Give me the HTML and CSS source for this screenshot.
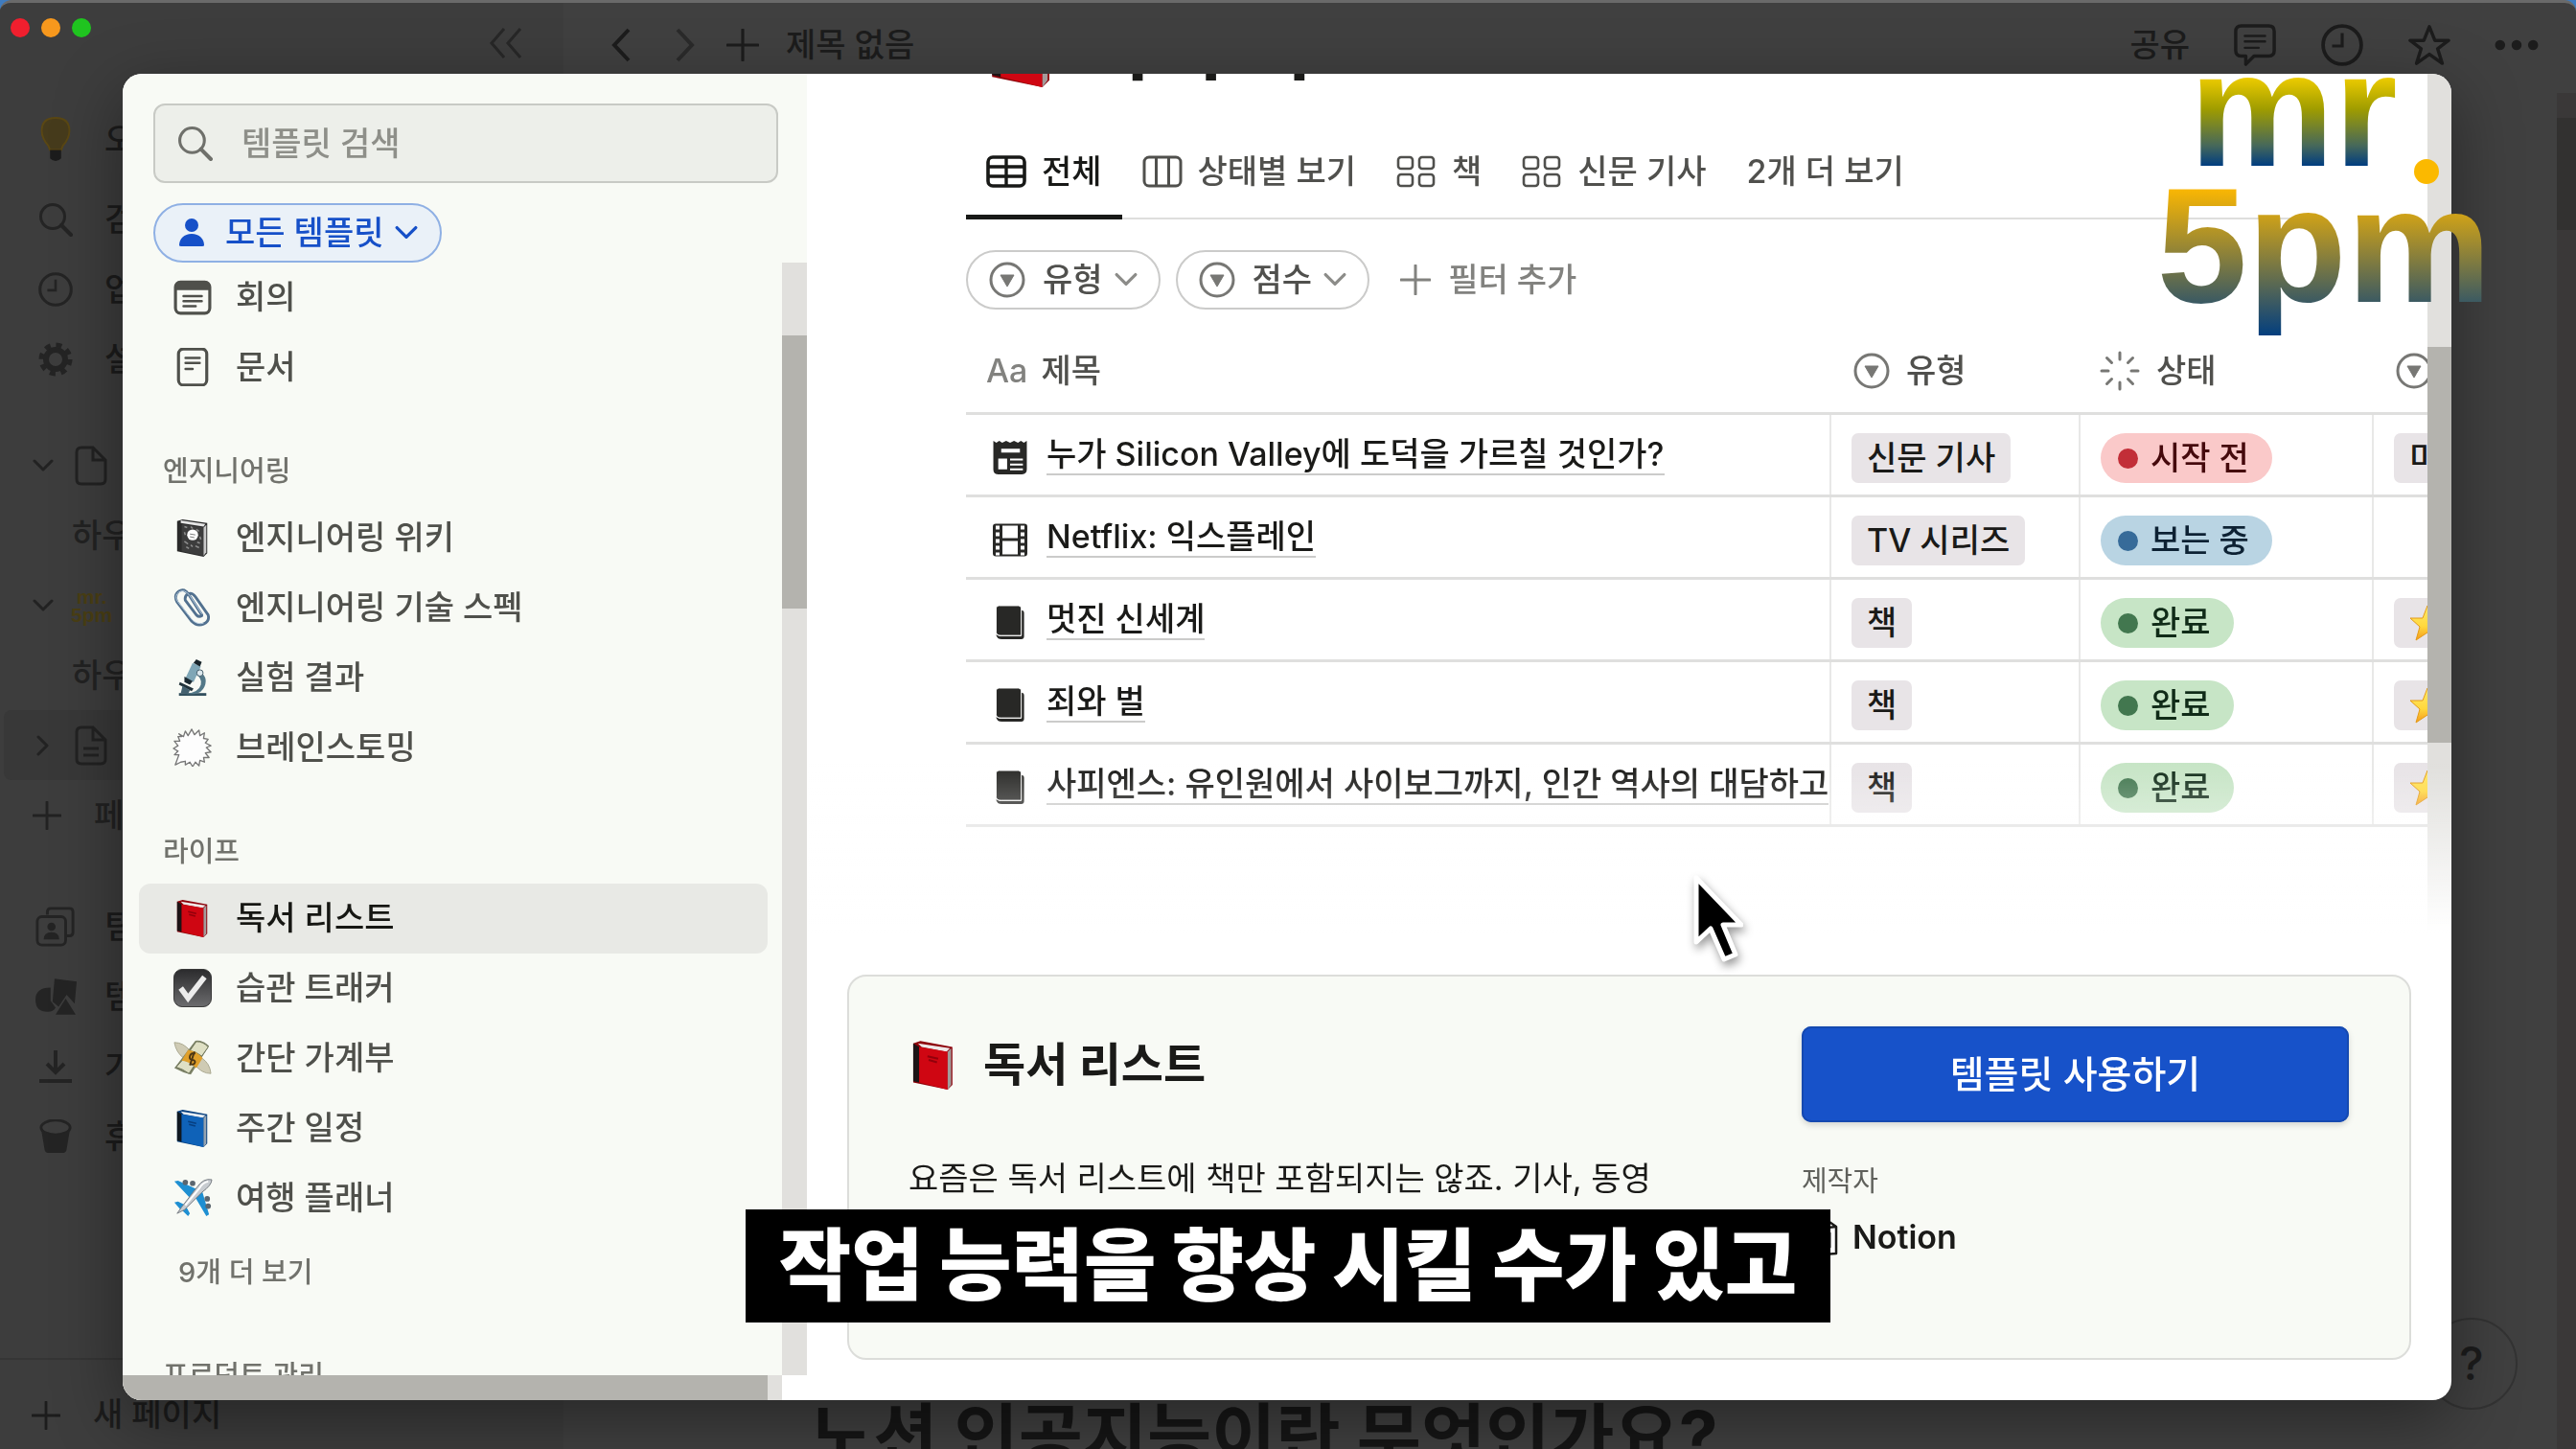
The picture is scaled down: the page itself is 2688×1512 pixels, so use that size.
FILE: index.html
```html
<!DOCTYPE html>
<html lang="ko">
<head>
  <meta charset="UTF-8" />
  <meta name="viewport" content="width=device-width, initial-scale=1.0" />
  <title>제목 없음</title>
  <link rel="stylesheet" href="styles.css">
</head>

<body>
  <!-- icon sprite -->
  <svg class="sprite" aria-hidden="true">
    <defs>
      <linearGradient id="starFill" x1="0" y1="0" x2="0" y2="1">
        <stop offset="0" stop-color="#ffe96b" />
        <stop offset="0.6" stop-color="#ffd83d" />
        <stop offset="1" stop-color="#f59a1b" />
      </linearGradient>
      <linearGradient id="checkFill" x1="0" y1="0" x2="0" y2="1">
        <stop offset="0" stop-color="#2b2b2d" />
        <stop offset="1" stop-color="#6c6c6e" />
      </linearGradient>
    </defs>
    <symbol id="search" viewBox="0 0 36 36"><circle cx="15" cy="15" r="12.5" fill="none" stroke="currentColor" stroke-width="3" /><path d="M24 24l10 10" stroke="currentColor" stroke-width="4" stroke-linecap="round" /></symbol>
    <symbol id="person" viewBox="0 0 28 30"><circle cx="14" cy="7" r="7" fill="currentColor" /><path d="M1 28c0-7 5-12 13-12s13 5 13 12q0 1-2 1H3q-2 0-2-1z" fill="currentColor" /></symbol>
    <symbol id="down" viewBox="0 0 22 22"><path d="M2 6l9 9 9-9" fill="none" stroke="currentColor" stroke-width="3" stroke-linecap="round" stroke-linejoin="round" /></symbol>
    <symbol id="plus" viewBox="0 0 32 32"><path d="M16 1v30M1 16h30" stroke="currentColor" stroke-width="3" stroke-linecap="round" /></symbol>
    <symbol id="meeting" viewBox="0 0 38 38"><rect x="2" y="4" width="34" height="31" rx="5" fill="none" stroke="currentColor" stroke-width="3" /><path d="M2 12V8q0-5 5-5h24q5 0 5 5v4z" fill="currentColor" /><path d="M10 18h18M10 23h18M10 28h12" stroke="currentColor" stroke-width="2.4" stroke-linecap="round" /></symbol>
    <symbol id="doc" viewBox="0 0 38 38"><rect x="5" y="1" width="28" height="36" rx="5" fill="none" stroke="currentColor" stroke-width="3" /><path d="M12 10h14M12 15h14M12 21h7" stroke="currentColor" stroke-width="2.4" stroke-linecap="round" /></symbol>
    <symbol id="notebook" viewBox="0 0 42 42"><path d="M4 3l6-2 27 4v33l-4 4L4 36z" fill="#2a2a2a" /><path d="M8 2l27 4-2 3L8 5z" fill="#e5e5e5" /><path d="M9 6l24 4v31L9 36z" fill="#3d3d3d" /><path d="M33 10l3-3v30l-3 4z" fill="#c9c9c9" /><path d="M12 9l3 1M25 12l3 2M12 25l4 3M24 30l4 2M14 31l3 2M19 9l2 2M26 26l3 1M12 15l1 3M29 20l1 3M19 29l2 2" stroke="#8d8d8d" stroke-width="1.6" /><ellipse cx="21" cy="18" rx="6" ry="6" fill="#fff" /><path d="M18 17l6 1M18 20l5 1" stroke="#777" /></symbol>
    <symbol id="clip" viewBox="0 0 42 42"><path d="M31 29L17 7Q12-1 6 3T4 15l16 21q6 6 13 3t5-10L24 9q-4-5-8-3t-3 7l12 16q3 3 6 1" fill="none" stroke="#52718f" stroke-width="3" stroke-linecap="round" /><path d="M31 28L18 8Q12 0 6 4T5 15l16 20q6 5 12 3" fill="none" stroke="#b9cfe2" stroke-width="1" /></symbol>
    <symbol id="microscope" viewBox="0 0 42 42"><path d="M6 38h30v3H6z" fill="#33505e" /><path d="M26 13q13 6 8 18-3 7-11 8h-9q14-2 16-10 2-7-6-12z" fill="#537888" /><path d="M21 5l9 4-8 17-9-4z" fill="#7fa6b6" /><path d="M25 1l6 3-2 5-7-4z" fill="#18242a" /><path d="M12 20l9 5-3 4-6-3z" fill="#1b2a32" /><path d="M7 26l15 7-2 3-14-7z" fill="#22333b" /><path d="M10 30l8 5-2 4-8-1z" fill="#44616f" /><circle cx="29" cy="16" r="3.5" fill="#dce8ee" stroke="#405a66" /></symbol>
    <symbol id="burst" viewBox="0 0 42 42"><path d="M6 6l5 3 2-6 3 5 4-7 3 6 5-5 1 6 5-3-1 6 5 1-3 4 6 3-5 2 5 5-6 1 4 5-6 0 1 5-5-2-1 6-4-4-3 5-3-5-5 3 0-4-5 1L2 40l4-11-5 0 4-4-5-3 5-3-4-5 6 0-2-5 4 0z" fill="#fdfdfd" stroke="#777" stroke-width="1.4" stroke-linejoin="round" /></symbol>
    <symbol id="redbook" viewBox="0 0 42 42"><path d="M4 3l6-2 27 5v32l-4 4-29-6z" fill="#8c0009" /><path d="M8 3l27 4-3 3L11 6z" fill="#eee6e6" /><path d="M4 3l5 3v30l-5-1z" fill="#1c1416" /><path d="M9 6l24 4v32L9 36z" fill="#cf0612" /><path d="M33 10l3-3v31l-3 4z" fill="#a39a9a" /><path d="M16 14l9 2M17 17l7 2" stroke="#93000b" stroke-width="1.6" /></symbol>
    <symbol id="bluebook" viewBox="0 0 42 42"><path d="M4 3l6-2 27 5v32l-4 4-29-6z" fill="#08407f" /><path d="M8 3l27 4-3 3L11 6z" fill="#e6ecf2" /><path d="M4 3l5 3v30l-5-1z" fill="#101820" /><path d="M9 6l24 4v32L9 36z" fill="#0f62b8" /><path d="M33 10l3-3v31l-3 4z" fill="#94a2b0" /><path d="M16 14l9 2M17 17l7 2" stroke="#073f80" stroke-width="1.6" /></symbol>
    <symbol id="check" viewBox="0 0 42 42"><rect x="0.5" y="0.5" width="41" height="41" rx="9" fill="url(#checkFill)" stroke="#333" /><path d="M8 21l8 11L34 9" fill="none" stroke="#ececec" stroke-width="6" /></symbol>
    <symbol id="money" viewBox="0 0 42 42"><path d="M1 4q10 0 17 9l-7 8Q3 15 1 4zM41 38q-10 0-17-9l7-8q9 6 10 17z" fill="#cfcbb4" stroke="#a9a68e" /><path d="M24 2q8-1 15 6l-20 31q-9-2-18-7z" fill="#7c8266" /><path d="M25 3q8 0 13 6l-7 10q-6-5-13-6zM10 23q8 1 13 6l-6 9q-7-5-14-7z" fill="#dfe0c4" stroke="#6d7359" /><path d="M16 12q9 1 16 9l-7 11q-7-7-16-8z" fill="#e0a02b" /><path d="M24 16q-5-1-6 3t3 4q4 1 2 4-2 2-5 0M23 14l-5 15" fill="none" stroke="#4c3614" stroke-width="2" /></symbol>
    <symbol id="plane" viewBox="0 0 42 42"><path d="M1 3l4-1 22 10-9 9zM39 39l-3 2-13-22 8-7zM1 26l4-1 8 4-5 5zM16 41l2-3-5-9-4 5z" fill="#1e8fd2" /><path d="M42 1q-9-2-16 8L9 31 4 38l8-4 19-19q11-8 11-14z" fill="#c8ccd1" stroke="#74797f" /><path d="M38 3q-6 1-10 8L13 29" fill="none" stroke="#fff" stroke-width="2" /><circle cx="13" cy="4" r="3" fill="#5b666f" /><circle cx="21" cy="5" r="3" fill="#5b666f" /><circle cx="37" cy="22" r="3" fill="#5b666f" /><circle cx="38" cy="30" r="3" fill="#5b666f" /></symbol>
    <symbol id="star" viewBox="0 0 38 38"><path d="M19 1l5 13 13 0-10 9 4 14-12-8-12 8 4-14L1 14h13z" fill="url(#starFill)" stroke="#e39a18" /></symbol>
    <symbol id="table" viewBox="0 0 42 34"><rect x="2" y="2" width="38" height="30" rx="5" fill="none" stroke="currentColor" stroke-width="3.6" /><path d="M2 12h38M2 22h38M21 2v30" stroke="currentColor" stroke-width="3.4" /></symbol>
    <symbol id="board" viewBox="0 0 42 34"><rect x="2" y="2" width="38" height="30" rx="5" fill="none" stroke="currentColor" stroke-width="3" /><path d="M14.500 2v30M27.500 2v30" stroke="currentColor" stroke-width="3" /></symbol>
    <symbol id="gallery" viewBox="0 0 42 34"><g fill="none" stroke="currentColor" stroke-width="2.6"><rect x="2" y="2" width="15" height="12" rx="3" /><rect x="24" y="2" width="15" height="12" rx="3" /><rect x="2" y="20" width="15" height="12" rx="3" /><rect x="24" y="20" width="15" height="12" rx="3" /></g></symbol>
    <symbol id="select" viewBox="0 0 38 38"><circle cx="19" cy="19" r="17" fill="none" stroke="currentColor" stroke-width="3" /><path d="M12 14h14l-7 12z" fill="currentColor" stroke="currentColor" stroke-linejoin="round" /></symbol>
    <symbol id="status" viewBox="0 0 42 42"><path d="M21 2v7M21 33v7M2 21h7M33 21h7M7.500 7.500l5 5M29.500 29.500l5 5M7.500 34.500l5-5M29.500 12.500l5-5" stroke="currentColor" stroke-width="3" stroke-linecap="round" /></symbol>
    <symbol id="news" viewBox="0 0 36 36"><path d="M1 1l3 2 3-2 3 2 4-2 4 2 4-2 4 2 3-2 3 2 3-2v29q0 5-5 5H6q-5 0-5-5z" fill="currentColor" /><path d="M9 9h19v4H9zM6 19h9v11H6zM18 19h13v2H18zM18 24h13v2H18zM18 29h13v2H18z" fill="#fff" /></symbol>
    <symbol id="film" viewBox="0 0 38 36"><rect x="1" y="1" width="36" height="34" rx="3" fill="currentColor" /><path d="M11 3h16v13H11zM11 19h16v14H11z" fill="#fff" /><path d="M6 3v31M32 3v31" stroke="#fff" stroke-width="4" stroke-dasharray="4 3" /></symbol>
    <symbol id="book" viewBox="0 0 32 38"><path d="M5 34h23V6q3 0 3 3v25q0 3-3 3H7q-5 0-6-5z" fill="currentColor" /><path d="M1 4q0-3 3-3h21q3 0 3 3v29H6q-5 0-5-4z" fill="currentColor" stroke="#fff" /></symbol>
    <symbol id="cube" viewBox="0 0 38 40"><path d="M2 5l24-3 10 7v28l-26 2-8-9z" fill="#fff" stroke="currentColor" stroke-width="2.500" stroke-linejoin="round" /><path d="M2 5l8 7 26-3M10 12v27" fill="none" stroke="currentColor" stroke-width="2.500" /><path d="M15 17v16M15 17l14 14M29 15v16" stroke="currentColor" stroke-width="3" /></symbol>
    <symbol id="bulb" viewBox="0 0 36 52"><path d="M10 32Q3 24 3 16 3 2 18 2t15 14q0 8-7 16l-2 5H12z" fill="#463b1c" stroke="#5a4713" stroke-width="2" /><path d="M12 37h12v9q-6 6-12 0z" fill="#1c1c1c" /></symbol>
    <symbol id="clock" viewBox="0 0 42 42"><circle cx="21" cy="21" r="19" fill="none" stroke="currentColor" stroke-width="3.600" /><path d="M21 9v13h-10" fill="none" stroke="currentColor" stroke-width="3" /></symbol>
    <symbol id="gear" viewBox="0 0 36 36"><circle cx="18" cy="18" r="10" fill="none" stroke="currentColor" stroke-width="6" /><circle cx="18" cy="18" r="15" fill="none" stroke="currentColor" stroke-width="5" stroke-dasharray="6 5.780" /></symbol>
    <symbol id="page" viewBox="0 0 34 42"><path d="M7 2h12l13 13v20q0 5-5 5H7q-5 0-5-5V7q0-5 5-5zM19 2v13h13" fill="none" stroke="currentColor" stroke-width="3" /></symbol>
    <symbol id="pagetext" viewBox="0 0 34 42"><path d="M7 2h12l13 13v20q0 5-5 5H7q-5 0-5-5V7q0-5 5-5zM19 2v13h13M9 24h16M9 31h16" fill="none" stroke="currentColor" stroke-width="3" /></symbol>
    <symbol id="team" viewBox="0 0 44 44"><path d="M13 9V6q0-4 4-4h20q4 0 4 4v22q0 4-4 4h-3" fill="none" stroke="currentColor" stroke-width="3" /><rect x="2" y="11" width="31" height="31" rx="5" fill="none" stroke="currentColor" stroke-width="3" /><circle cx="17.500" cy="22" r="4.500" fill="currentColor" /><path d="M9 36q0-8 8.500-8t8.500 8z" fill="currentColor" /></symbol>
    <symbol id="shapes" viewBox="0 0 42 38"><path d="M20 1l22 3-2 22-8-9-8 12-6-5z" fill="currentColor" /><path d="M16 10q-15 0-15 12t12 12q6 0 8-4l-5-7z" fill="currentColor" /><path d="M31 21l10 16H21z" fill="currentColor" /></symbol>
    <symbol id="import" viewBox="0 0 36 36"><path d="M18 1v22M9 15l9 9 9-9M1 33h34" fill="none" stroke="currentColor" stroke-width="4" /></symbol>
    <symbol id="trash" viewBox="0 0 36 38"><ellipse cx="18" cy="9" rx="16" ry="8" fill="none" stroke="currentColor" stroke-width="3" /><path d="M2 10l4 24q1 3 5 3h14q4 0 5-3l4-24q-5 7-16 7T2 10z" fill="currentColor" /></symbol>
    <symbol id="comment" viewBox="0 0 46 46"><path d="M8 2h30q6 0 6 6v21q0 6-6 6H22l-9 9v-9H8q-6 0-6-6V8q0-6 6-6z" fill="none" stroke="currentColor" stroke-width="3.600" stroke-linejoin="round" /><path d="M12 13h22M12 19h22M12 26h15" stroke="currentColor" stroke-width="2.600" stroke-linecap="round" /></symbol>
    <symbol id="fav" viewBox="0 0 48 46"><path d="M24 3l6 15h15L33 27l5 16-14-10-14 10 5-16L3 18h15z" fill="none" stroke="currentColor" stroke-width="3.600" stroke-linejoin="round" /></symbol>
  </svg>

  <div class="app">
    <aside class="side">
      <div class="side-top">
        <div class="lights"><i class="red"></i><i class="orange"></i><i class="green"></i></div>
        <svg class="collapse" viewBox="0 0 36 32"><path d="M16 1L3 16l13 15M33 1L20 16l13 15" fill="none" stroke="currentColor" stroke-width="3" /></svg>
      </div>
      <div class="side-row first"><svg class="bulb"><use href="#bulb" /></svg>오후다섯씨</div>
      <div class="side-row"><svg><use href="#search" /></svg>검색</div>
      <div class="side-row"><svg><use href="#clock" /></svg>업데이트</div>
      <div class="side-row"><svg><use href="#gear" /></svg>설정</div>

      <div class="side-pages">
        <div class="page-row"><svg class="arrow"><use href="#down" /></svg><svg class="page-icon"><use href="#page" /></svg></div>
        <div class="page-row child">하우투</div>
        <div class="page-row"><svg class="arrow"><use href="#down" /></svg><span class="mini-logo">mr.<br>5pm</span></div>
        <div class="page-row child">하우투</div>
        <div class="page-row current"><svg class="arrow closed"><use href="#down" /></svg><svg class="page-icon"><use href="#pagetext" /></svg></div>
        <div class="page-row add"><svg class="plus"><use href="#plus" /></svg>페이지 추가</div>
      </div>

      <div class="side-row"><svg class="wide"><use href="#team" /></svg>팀스페이스</div>
      <div class="side-row"><svg class="wide"><use href="#shapes" /></svg>템플릿</div>
      <div class="side-row"><svg><use href="#import" /></svg>가져오기</div>
      <div class="side-row"><svg><use href="#trash" /></svg>휴지통</div>
      <div class="new-page"><svg class="plus"><use href="#plus" /></svg>새 페이지</div>
    </aside>

    <main class="page">
      <div class="topbar">
        <svg class="nav-arrow" viewBox="0 0 22 36"><path d="M19 2L4 18l15 16" fill="none" stroke="currentColor" stroke-width="4" /></svg>
        <svg class="nav-arrow forward" viewBox="0 0 22 36"><path d="M3 2l15 16L3 34" fill="none" stroke="currentColor" stroke-width="4" /></svg>
        <svg class="nav-plus"><use href="#plus" /></svg>
        <span>제목 없음</span>
        <div class="top-actions">
          <span>공유</span>
          <svg><use href="#comment" /></svg>
          <svg><use href="#clock" /></svg>
          <svg><use href="#fav" /></svg>
          <svg viewBox="0 0 48 46"><circle cx="6" cy="23" r="5.500" /><circle cx="24" cy="23" r="5.500" /><circle cx="42" cy="23" r="5.500" /></svg>
        </div>
      </div>
      <h1 class="page-title">노션 인공지능이란 무엇인가요?</h1>
      <div class="page-scroll"><i></i></div>
      <button class="help">?</button>
    </main>
  </div>

  <section class="modal">
    <div class="picker">
      <div class="picker-head">
        <label class="search"><svg><use href="#search" /></svg><input type="text" placeholder="템플릿 검색" aria-label="템플릿 검색"></label>
        <button class="all"><svg class="person"><use href="#person" /></svg>모든 템플릿<svg class="down"><use href="#down" /></svg></button>
      </div>
      <div class="picker-body">
        <nav class="list">
          <a class="item" href="#"><svg><use href="#meeting" /></svg>회의</a>
          <a class="item" href="#"><svg><use href="#doc" /></svg>문서</a>
          <h2>엔지니어링</h2>
          <a class="item" href="#"><svg><use href="#notebook" /></svg>엔지니어링 위키</a>
          <a class="item" href="#"><svg><use href="#clip" /></svg>엔지니어링 기술 스펙</a>
          <a class="item" href="#"><svg><use href="#microscope" /></svg>실험 결과</a>
          <a class="item" href="#"><svg><use href="#burst" /></svg>브레인스토밍</a>
          <h2>라이프</h2>
          <a class="item selected" href="#"><svg><use href="#redbook" /></svg>독서 리스트</a>
          <a class="item" href="#"><svg><use href="#check" /></svg>습관 트래커</a>
          <a class="item" href="#"><svg><use href="#money" /></svg>간단 가계부</a>
          <a class="item" href="#"><svg><use href="#bluebook" /></svg>주간 일정</a>
          <a class="item" href="#"><svg><use href="#plane" /></svg>여행 플래너</a>
          <a class="more" href="#">9개 더 보기</a>
          <h2>프로덕트 관리</h2>
        </nav>
        <div class="scroll-y"><i></i></div>
      </div>
      <div class="scroll-x"><i></i></div>
    </div>

    <div class="detail">
      <div class="preview">
        <div class="preview-main">
          <div class="preview-title"><svg><use href="#redbook" /></svg><h1>독서 리스트</h1></div>
          <div class="tabs">
            <button class="tab active"><svg><use href="#table" /></svg>전체</button>
            <button class="tab"><svg><use href="#board" /></svg>상태별 보기</button>
            <button class="tab"><svg><use href="#gallery" /></svg>책</button>
            <button class="tab"><svg><use href="#gallery" /></svg>신문 기사</button>
            <button class="tab">2개 더 보기</button>
          </div>
          <div class="filters">
            <button class="filter"><svg><use href="#select" /></svg>유형<svg class="down"><use href="#down" /></svg></button>
            <button class="filter"><svg><use href="#select" /></svg>점수<svg class="down"><use href="#down" /></svg></button>
            <button class="add-filter"><svg><use href="#plus" /></svg>필터 추가</button>
          </div>
          <table>
            <thead>
              <tr>
                <th class="c-title"><div class="th"><span class="aa">Aa</span>제목</div></th>
                <th class="c-type"><div class="th"><svg><use href="#select" /></svg>유형</div></th>
                <th class="c-status"><div class="th"><svg class="spin"><use href="#status" /></svg>상태</div></th>
                <th class="c-score"><div class="th"><svg><use href="#select" /></svg></div></th>
              </tr>
            </thead>
            <tbody>
              <tr>
                <td><div class="name"><svg><use href="#news" /></svg><a href="#">누가 Silicon Valley에 도덕을 가르칠 것인가?</a></div></td>
                <td><span class="tag">신문 기사</span></td>
                <td><span class="state todo">시작 전</span></td>
                <td><span class="tag">미정</span></td>
              </tr>
              <tr>
                <td><div class="name"><svg><use href="#film" /></svg><a href="#">Netflix: 익스플레인</a></div></td>
                <td><span class="tag">TV 시리즈</span></td>
                <td><span class="state doing">보는 중</span></td>
                <td></td>
              </tr>
              <tr>
                <td><div class="name"><svg><use href="#book" /></svg><a href="#">멋진 신세계</a></div></td>
                <td><span class="tag">책</span></td>
                <td><span class="state done">완료</span></td>
                <td><span class="tag"><svg><use href="#star" /></svg></span></td>
              </tr>
              <tr>
                <td><div class="name"><svg><use href="#book" /></svg><a href="#">죄와 벌</a></div></td>
                <td><span class="tag">책</span></td>
                <td><span class="state done">완료</span></td>
                <td><span class="tag"><svg><use href="#star" /></svg></span></td>
              </tr>
              <tr>
                <td><div class="name"><svg><use href="#book" /></svg><a href="#">사피엔스: 유인원에서 사이보그까지, 인간 역사의 대담하고</a></div></td>
                <td><span class="tag">책</span></td>
                <td><span class="state done">완료</span></td>
                <td><span class="tag"><svg><use href="#star" /></svg></span></td>
              </tr>
            </tbody>
          </table>
        </div>
        <div class="scroll-y"><i></i></div>
        <div class="fade"></div>
      </div>

      <div class="info">
        <div>
          <h2><svg><use href="#redbook" /></svg>독서 리스트</h2>
          <p>요즘은 독서 리스트에 책만 포함되지는 않죠. 기사, 동영</p>
        </div>
        <div>
          <button class="use">템플릿 사용하기</button>
          <div class="by">제작자</div>
          <div class="author"><svg><use href="#cube" /></svg>Notion</div>
        </div>
      </div>
    </div>
  </section>

  <!-- video overlays -->
  <div class="logo"><span class="mr">mr</span><i class="dot"></i><span class="five">5pm</span></div>
  <div class="caption"><p>작업 능력을 향상 시킬 수가 있고</p></div>
  <svg class="cursor" viewBox="0 0 52 92"><path d="M3 4v67l15-14 14 32 12-5-13-31h19z" fill="#000" stroke="#fff" stroke-width="5" stroke-linejoin="round" /></svg>
</body>
</html>
```
FILE: styles.css
```css
* {
  box-sizing: border-box;
}

body {
  margin: 0;
  height: 100vh;
  overflow: hidden;
  background: #3f7cc0;
  font-family: Inter, "Noto Sans CJK KR", sans-serif;
  font-size: 34px;
  font-weight: 500;
  line-height: 40px;
  color: #1a1a18;
  white-space: nowrap;
}

button,
input {
  font: inherit;
  color: inherit;
  border: none;
  background: none;
  padding: 0;
}

a {
  color: inherit;
  text-decoration: none;
}

h1,
h2,
p {
  margin: 0;
}

svg {
  flex: none;
}

.sprite {
  position: absolute;
  width: 0;
  height: 0;
}

/* dimmed app behind the modal */
.app {
  display: flex;
  height: 100vh;
  background: #404040;
  border-top: 3px solid #6a6a6a;
  border-radius: 12px 12px 0 0;
  overflow: hidden;
  color: #1c1c1c;
}

.side {
  width: 588px;
  flex: none;
  display: flex;
  flex-direction: column;
  background: #3d3d3d;
}

.side-top {
  height: 101px;
  padding: 16px 42px 0 11px;
  display: flex;
  justify-content: space-between;
}

.lights {
  display: flex;
  gap: 12px;
}

.lights i {
  width: 20px;
  height: 20px;
  border-radius: 50%;
}

.red {
  background: #f01f2e;
}

.orange {
  background: #f7981d;
}

.green {
  background: #1fc41f;
}

.collapse {
  width: 36px;
  height: 32px;
  margin-top: 10px;
  color: #272727;
}

.side-row {
  height: 73px;
  flex: none;
  display: flex;
  align-items: center;
  gap: 33px;
  padding-left: 40px;
}

.side-row svg {
  width: 36px;
  height: 36px;
  color: #242424;
}

.side-row svg.bulb {
  height: 50px;
}

.side-row svg.wide {
  width: 44px;
  height: 42px;
  margin: 0 -4px;
}

.side-row.first {
  height: 84px;
  margin-bottom: 4px;
}

.side-pages {
  padding: 38px 0 43px;
}

.page-row {
  height: 73px;
  display: flex;
  align-items: center;
  gap: 22px;
  padding-left: 34px;
  color: #222;
}

.page-row.child {
  padding-left: 75px;
}

.page-row.current {
  margin-left: 4px;
  padding-left: 30px;
  background: #383838;
  border-radius: 8px;
}

.page-row.add {
  padding-left: 34px;
  gap: 34px;
}

.arrow {
  width: 22px;
  height: 22px;
}

.arrow.closed {
  transform: rotate(-90deg);
}

.page-icon {
  width: 34px;
  height: 42px;
}

.mini-logo {
  font: bold 21px/19px "Liberation Sans", sans-serif;
  color: #4a3f14;
  text-align: center;
  margin-left: -4px;
}

.plus {
  width: 30px;
  height: 30px;
}

.new-page {
  margin-top: auto;
  height: 95px;
  padding: 37px 0 0 33px;
  border-top: 2px solid #353535;
  display: flex;
  gap: 34px;
}

.new-page .plus {
  margin-top: 6px;
}

.page {
  flex: 1;
  position: relative;
  display: flex;
  flex-direction: column;
  justify-content: space-between;
}

.topbar {
  height: 90px;
  display: flex;
  align-items: center;
  padding: 0 39px 2px 49px;
}

.nav-arrow {
  width: 22px;
  height: 36px;
}

.nav-arrow.forward {
  margin: 0 32px 0 45px;
  color: #2a2a2a;
}

.nav-plus {
  width: 34px;
  height: 34px;
  margin-right: 28px;
}

.top-actions {
  margin-left: auto;
  display: flex;
  align-items: center;
  gap: 45px;
}

.top-actions svg {
  width: 46px;
  height: 44px;
  fill: currentColor;
}

.page-title {
  height: 55px;
  padding-left: 256px;
  font-size: 73px;
  line-height: 84px;
  color: #161616;
}

.page-scroll {
  position: absolute;
  top: 94px;
  right: 0;
  bottom: 0;
  width: 20px;
  padding-top: 26px;
  background: #3a3838;
}

.page-scroll i {
  display: block;
  height: 117px;
  background: #323130;
}

.help {
  position: absolute;
  right: 61px;
  bottom: 41px;
  width: 96px;
  height: 96px;
  border: 2px solid #333;
  border-radius: 50%;
  font-size: 48px;
}

/* template picker */
.modal {
  position: fixed;
  top: 77px;
  right: 130px;
  bottom: 51px;
  left: 128px;
  display: flex;
  background: #fff;
  border-radius: 20px;
  overflow: hidden;
  box-shadow: 0 20px 70px rgba(0, 0, 0, 0.4);
}

.picker {
  width: 714px;
  flex: none;
  display: flex;
  flex-direction: column;
  background: #f8faf5;
}

.picker-head {
  padding: 31px 30px 0 32px;
  display: flex;
  flex-direction: column;
  align-items: flex-start;
  gap: 21px;
}

.search {
  width: 100%;
  height: 83px;
  display: flex;
  align-items: center;
  gap: 30px;
  padding: 0 23px;
  border: 2px solid #c8cac5;
  border-radius: 12px;
  background: #edefea;
  color: #6f706b;
}

.search svg {
  width: 37px;
  height: 37px;
}

.search input {
  flex: 1;
  outline: none;
}

.search input::placeholder {
  color: #8e8f89;
}

.all {
  height: 62px;
  padding: 0 23px 0 24px;
  display: flex;
  align-items: center;
  border: 2px solid #8fb0e4;
  border-radius: 31px;
  background: #eaf1f8;
  color: #1650c8;
}

.person {
  width: 28px;
  height: 30px;
  margin-right: 21px;
}

.down {
  width: 24px;
  height: 24px;
  margin-left: 12px;
}

.picker-body {
  flex: 1;
  min-height: 0;
  display: flex;
}

.list {
  flex: 1;
  overflow: hidden;
  padding: 0 15px 0 17px;
}

.item {
  display: flex;
  align-items: center;
  gap: 24px;
  height: 73px;
  padding: 0 0 2px 35px;
  border-radius: 12px;
  color: #4f504b;
}

.item svg {
  width: 42px;
  height: 40px;
}

.selected {
  background: #e8e9e5;
  color: #161713;
}

.list h2 {
  padding: 52px 0 13px 25px;
  font-size: 29px;
  font-weight: 500;
  color: #71726c;
}

.more {
  display: block;
  padding: 21px 0 16px 41px;
  font-size: 29px;
  color: #71726c;
}

.scroll-y {
  display: flow-root;
  width: 26px;
  flex: none;
  background: #e1e0dd;
}

.scroll-y i {
  display: block;
  height: 285px;
  margin-top: 76px;
  background: #b4b3ae;
}

.scroll-x {
  height: 26px;
  margin-right: 26px;
  padding-right: 15px;
  background: #e1e0dd;
  box-shadow: 26px 0 #fff;
}

.scroll-x i {
  display: block;
  height: 100%;
  background: #b4b3ae;
}

.detail {
  flex: 1;
  min-width: 0;
  display: flex;
  flex-direction: column;
}

.preview {
  position: relative;
  flex: 1;
  min-height: 0;
  display: flex;
}

.preview .scroll-y {
  width: 25px;
}

.preview .scroll-y i {
  margin-top: 285px;
  height: 413px;
}

.preview-main {
  flex: 1;
  min-width: 0;
  overflow: hidden;
  padding-left: 166px;
}

/* only the foot of the heading is left after scrolling */
.preview-title {
  height: 52px;
  display: flex;
  align-items: flex-end;
  gap: 26px;
  padding: 0 0 38px 20px;
}

.preview-title svg {
  width: 76px;
  height: 76px;
}

.preview-title h1 {
  font-size: 80px;
  line-height: 88px;
}

.tabs {
  display: flex;
  height: 100px;
  margin-right: 130px;
  box-shadow: inset 0 -2px #dededd;
}

.tab {
  display: flex;
  align-items: center;
  gap: 16px;
  padding: 0 21px;
  color: #50504d;
}

.tab svg {
  width: 42px;
  height: 34px;
}

.tab.active {
  color: #181917;
  box-shadow: inset 0 -5px #181917;
}

.filters {
  margin: 32px 0 22px;
  display: flex;
  gap: 16px;
}

.filter {
  height: 62px;
  padding: 0 22px;
  display: flex;
  align-items: center;
  border: 2px solid #cbcbca;
  border-radius: 31px;
  color: #50504d;
}

.filter svg:first-child {
  width: 38px;
  height: 38px;
  margin-right: 18px;
  color: #777774;
}

.filter .down {
  color: #8c8c89;
}

.add-filter {
  display: flex;
  align-items: center;
  gap: 18px;
  padding-left: 16px;
  color: #82827f;
}

.add-filter svg {
  width: 32px;
  height: 32px;
}

table {
  width: 100%;
  table-layout: fixed;
  border-collapse: collapse;
}

th,
td {
  height: 86px;
  padding: 0 0 0 21px;
  border-bottom: 3px solid #dfdfde;
  overflow: hidden;
  text-align: left;
  font-weight: 500;
}

td + td {
  border-left: 2px solid #e8e8e7;
}

.c-type {
  width: 260px;
}

.c-status {
  width: 306px;
}

.c-score {
  width: 57px;
}

.th {
  display: flex;
  align-items: center;
  gap: 17px;
  color: #50504d;
}

.th svg {
  width: 38px;
  height: 38px;
  margin-left: 3px;
  color: #777774;
}

.th .spin {
  width: 42px;
  height: 42px;
  margin-left: 0;
}

.aa {
  margin-right: -3px;
  color: #82827f;
}

.name {
  display: flex;
  align-items: center;
  gap: 19px;
  padding: 2px 0 0 6px;
}

.name svg {
  width: 38px;
  height: 37px;
  margin-top: 4px;
  color: #282826;
}

.name a {
  border-bottom: 2px solid #cbcbca;
}

.tag,
.state {
  display: inline-flex;
  align-items: center;
  height: 52px;
  margin-top: 8px;
  padding: 0 16px;
  border-radius: 7px;
  background: #e8e4e7;
}

.tag svg {
  width: 38px;
  height: 38px;
}

.state {
  gap: 13px;
  padding: 0 24px 0 18px;
  border-radius: 26px;
}

.state::before {
  content: "";
  width: 21px;
  height: 21px;
  border-radius: 50%;
  background: #c22e38;
}

.todo {
  background: #fac9c9;
  color: #45090c;
}

.doing {
  background: #b9d4e3;
  color: #0d2133;
}

.doing::before {
  background: #376b99;
}

.done {
  background: #c7e5c6;
  color: #102b18;
}

.done::before {
  background: #42774f;
}

.fade {
  position: absolute;
  left: 0;
  right: 0;
  bottom: 42px;
  height: 178px;
  background: linear-gradient(rgba(255, 255, 255, 0), #fff);
  box-shadow: 0 42px #fff;
}

.info {
  margin: 0 42px 42px;
  padding: 52px 63px 106px 62px;
  display: grid;
  grid-template-columns: 1fr 38%;
  border: 2px solid #dcddda;
  border-radius: 20px;
  background: #f8faf5;
}

.info h2 {
  display: flex;
  align-items: center;
  gap: 26px;
  height: 80px;
  margin-bottom: 54px;
  font-size: 48px;
}

.info h2 svg {
  width: 52px;
  height: 52px;
}

.info p {
  line-height: 50px;
  font-weight: 400;
}

.use {
  width: 100%;
  height: 100px;
  border-radius: 10px;
  background: #1752c9;
  box-shadow: inset 0 0 0 2px #1549b0, 0 3px 6px rgba(0, 0, 0, 0.15);
  color: #fff;
  font-size: 39px;
}

.by {
  margin: 42px 0 18px;
  font-size: 29px;
  font-weight: 400;
  color: #5f605b;
}

.author {
  display: flex;
  align-items: center;
  gap: 15px;
  font-weight: 600;
}

.author svg {
  width: 38px;
  height: 40px;
}

/* channel logo */
.logo {
  position: fixed;
  top: 14px;
  right: 88px;
  display: grid;
  font: bold 170px/200px "Liberation Sans", sans-serif;
}

.mr,
.five {
  color: transparent;
  background-clip: text;
  -webkit-background-clip: text;
}

.mr {
  height: 160px;
  padding-left: 34px;
  background-image: linear-gradient(#f4d000 64px, #9f9c00 100px, #46685a 138px, #003d80 159px);
}

.five {
  height: 200px;
  margin-top: -18px;
  background-image: linear-gradient(#ffb900 38px, #003d80 196px);
}

.dot {
  position: absolute;
  top: 152px;
  right: 55px;
  width: 26px;
  height: 26px;
  border-radius: 50%;
  background: #fbb900;
}

.caption {
  position: fixed;
  left: 0;
  right: 0;
  bottom: 132px;
  display: flex;
  justify-content: center;
}

.caption p {
  padding: 0 35px;
  background: #000;
  color: #fff;
  font-size: 82px;
  font-weight: 900;
  line-height: 118px;
}

.cursor {
  position: fixed;
  top: 912px;
  left: 1767px;
  width: 52px;
  height: 92px;
  filter: drop-shadow(2px 5px 5px rgba(0, 0, 0, 0.4));
}
```
